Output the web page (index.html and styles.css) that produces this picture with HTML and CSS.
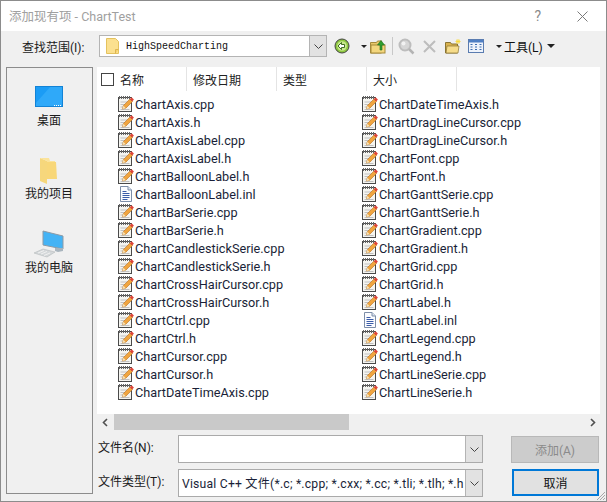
FILE: index.html
```html
<!DOCTYPE html>
<html lang="zh">
<head>
<meta charset="utf-8">
<title>添加现有项 - ChartTest</title>
<link rel="stylesheet" href="styles.css">
</head>
<body>
<svg class="defs" width="0" height="0" aria-hidden="true">
  <symbol id="cpp" viewBox="0 0 18 18">
    <rect x="1.500" y="2.500" width="13" height="14" fill="#f4f4f0" stroke="#4a4a4a"/>
    <path d="M2.500 1v3M4.500 1v3M6.500 1v3M8.500 1v3M10.500 1v3M12.500 1v3" stroke="#666"/>
    <path d="M3.500 7h8M3.500 9.500h5M3.500 12h3M3.500 14.500h9" stroke="#c0c0c0"/>
    <path d="M5.500 14l.8-3.300 6.700-6.700 2.500 2.500-6.700 6.700z" fill="#f0a540" stroke="#b8701e" stroke-width=".6"/>
    <path d="M5.500 14l.8-3.300 2.500 2.500z" fill="#f6e2b6"/>
    <path d="M12.800 4.200l1.700-2 2.400 2.200-1.700 2z" fill="#dd4438"/>
  </symbol>
  <symbol id="inl" viewBox="0 0 18 18">
    <path d="M3.500 1.500h7.500l3.500 3.500v11.500h-11z" fill="#fbfcff" stroke="#7d8ea8"/>
    <path d="M11 1.500v3.500h3.500" fill="#dfe6f2" stroke="#7d8ea8"/>
    <path d="M5.500 6.500h4M5.500 8.500h7M5.500 10.500h7M5.500 12.500h7M5.500 14.500h5" stroke="#3a5ca8"/>
  </symbol>
  <symbol id="folder" viewBox="0 0 16 18">
    <path d="M.5 1.500h9l3 3v12h-12z" fill="#fbe08f" stroke="#e4c25e"/>
    <path d="M9.500 16.500v-4h3" fill="#f6d06a" stroke="#dcb550"/>
  </symbol>
</svg>
<div class="window">
  <header class="titlebar">
    <span class="title">添加现有项 - ChartTest</span>
    <span class="help">?</span>
    <svg class="close" width="11" height="11" viewBox="0 0 11 11"><path d="M.5.5l10 10M10.500.5l-10 10" stroke="#7a7a7a" fill="none"/></svg>
  </header>
  <div class="dialog">
    <div class="lookrow">
      <span class="looklabel">查找范围(I):</span>
      <div class="combo lookcombo">
        <svg class="lookfolder" width="16" height="18"><use href="#folder"/></svg>
        <span class="lookvalue">HighSpeedCharting</span>
        <span class="drop lookdrop"><svg width="9" height="5" viewBox="0 0 9 5"><path d="M.5.500l4 4 4-4" stroke="#444" fill="none"/></svg></span>
      </div>
      <div class="toolbar">
        <svg class="tool-back" width="16" height="16" viewBox="0 0 16 16">
          <circle cx="8" cy="8" r="7" fill="#8cc63f" stroke="#444"/>
          <circle cx="8" cy="8" r="4.800" fill="#c9e88e"/>
          <path d="M10.500 6.500h-3v-2l-3.500 3.500 3.500 3.500v-2h3z" fill="#fff" stroke="#2f5d12" stroke-width=".9"/>
        </svg>
        <span class="tri tool-tri1"></span>
        <svg class="tool-up" width="16" height="15" viewBox="0 0 16 15">
          <path d="M.5 3.500h6l1-1.500h4v12h-11z" fill="#e8c86a" stroke="#a68a3a"/>
          <rect x="1" y="6" width="14" height="8" fill="#f3d67d" stroke="#a68a3a"/>
          <path d="M10 11v-5h-2.500l3.500-4.500 3.500 4.500h-2.500v5z" fill="#2f9e2f" stroke="#1e6e1e" stroke-width=".6"/>
        </svg>
        <span class="tool-sep"></span>
        <svg class="tool-search" width="17" height="17" viewBox="0 0 17 17">
          <circle cx="7" cy="7" r="5.500" fill="#d6d6d6" stroke="#bdbdbd" stroke-width="2"/>
          <circle cx="5.500" cy="5.500" r="2" fill="#f2f2f2"/>
          <path d="M11 11l4.500 4.500" stroke="#b4b4b4" stroke-width="2.500"/>
        </svg>
        <svg class="tool-x" width="13" height="13" viewBox="0 0 13 13"><path d="M1 1l11 11M12 1l-11 11" stroke="#bdbdbd" stroke-width="2"/></svg>
        <svg class="tool-new" width="16" height="15" viewBox="0 0 16 15">
          <path d="M.5 3.500h5l1 1.500h6v9h-12z" fill="#d9b24f" stroke="#8a7432"/>
          <path d="M1 14l1-7h12l-1 7z" fill="#f6dc8a" stroke="#8a7432" stroke-width=".7"/>
          <path d="M13 0v5M10.500 2.500h5M11 .8l4 3.400M15 .8l-4 3.400" stroke="#f8d93a" stroke-width=".9"/>
        </svg>
        <svg class="tool-grid" width="16" height="14" viewBox="0 0 16 14">
          <rect x=".5" y=".5" width="15" height="13" fill="#eef3fb" stroke="#5a7cb0"/>
          <rect x="1" y="1" width="14" height="2.500" fill="#4f7fc4"/>
          <path d="M2.500 5.500h2M2.500 8h2M2.500 10.500h2M7 5.500h2M7 8h2M7 10.500h2M11.500 5.500h2M11.500 8h2M11.500 10.500h2" stroke="#3d6cb0"/>
        </svg>
        <span class="tri tool-tri2"></span>
        <span class="tool-label">工具(L)</span>
        <span class="tri tri-big"></span>
      </div>
    </div>
    <div class="main">
      <nav class="places">
        <div class="place place-desktop">
          <svg width="28" height="21" viewBox="0 0 28 21">
            <rect width="28" height="21" fill="#1b9cf5"/>
            <path d="M0 21l0-3 16-18h12v21z" fill="#2fa9f9"/>
            <rect x=".5" y=".5" width="27" height="20" fill="none" stroke="#1283d6"/>
            <path d="M19 19.500h1M21 19.500h1M23 19.500h1M25 19.500h1" stroke="#fff"/>
          </svg>
          <span>桌面</span>
        </div>
        <div class="place place-projects">
          <svg width="20" height="27" viewBox="0 0 20 27">
            <path d="M1 1l7 3v23l-7-3z" fill="#f6d77c"/>
            <path d="M1 1h9l1 3h5v18h-8v-18z" fill="#fbe39b"/>
            <path d="M8 5h9l1 17h-10z" fill="#f8d779"/>
          </svg>
          <span>我的项目</span>
        </div>
        <div class="place place-pc">
          <svg width="32" height="29" viewBox="0 0 32 29">
            <path d="M10 2l20 5v13l-20-4z" fill="#44b3f5" stroke="#8d9aa5"/>
            <path d="M22 19v3l3 1 5-1v-3z" fill="#a8b4bd"/>
            <path d="M1 24l9-4 12 3-8 5z" fill="#d4d8da" stroke="#b4b8bb" stroke-width=".6"/>
            <path d="M5 24l6-2.500M8 25l6-2.500M11 26.500l6-2.500" stroke="#f0f0f0"/>
          </svg>
          <span>我的电脑</span>
        </div>
      </nav>
      <div class="pane">
        <section class="list">
          <div class="listhead">
            <span class="col col-name"><i class="check"></i>名称</span>
            <span class="col">修改日期</span>
            <span class="col">类型</span>
            <span class="col">大小</span>
          </div>
          <div class="files">
            <ul class="filecol">
              <li><svg><use href="#cpp"/></svg>ChartAxis.cpp</li>
              <li><svg><use href="#cpp"/></svg>ChartAxis.h</li>
              <li><svg><use href="#cpp"/></svg>ChartAxisLabel.cpp</li>
              <li><svg><use href="#cpp"/></svg>ChartAxisLabel.h</li>
              <li><svg><use href="#cpp"/></svg>ChartBalloonLabel.h</li>
              <li><svg><use href="#inl"/></svg>ChartBalloonLabel.inl</li>
              <li><svg><use href="#cpp"/></svg>ChartBarSerie.cpp</li>
              <li><svg><use href="#cpp"/></svg>ChartBarSerie.h</li>
              <li><svg><use href="#cpp"/></svg>ChartCandlestickSerie.cpp</li>
              <li><svg><use href="#cpp"/></svg>ChartCandlestickSerie.h</li>
              <li><svg><use href="#cpp"/></svg>ChartCrossHairCursor.cpp</li>
              <li><svg><use href="#cpp"/></svg>ChartCrossHairCursor.h</li>
              <li><svg><use href="#cpp"/></svg>ChartCtrl.cpp</li>
              <li><svg><use href="#cpp"/></svg>ChartCtrl.h</li>
              <li><svg><use href="#cpp"/></svg>ChartCursor.cpp</li>
              <li><svg><use href="#cpp"/></svg>ChartCursor.h</li>
              <li><svg><use href="#cpp"/></svg>ChartDateTimeAxis.cpp</li>
            </ul>
            <ul class="filecol">
              <li><svg><use href="#cpp"/></svg>ChartDateTimeAxis.h</li>
              <li><svg><use href="#cpp"/></svg>ChartDragLineCursor.cpp</li>
              <li><svg><use href="#cpp"/></svg>ChartDragLineCursor.h</li>
              <li><svg><use href="#cpp"/></svg>ChartFont.cpp</li>
              <li><svg><use href="#cpp"/></svg>ChartFont.h</li>
              <li><svg><use href="#cpp"/></svg>ChartGanttSerie.cpp</li>
              <li><svg><use href="#cpp"/></svg>ChartGanttSerie.h</li>
              <li><svg><use href="#cpp"/></svg>ChartGradient.cpp</li>
              <li><svg><use href="#cpp"/></svg>ChartGradient.h</li>
              <li><svg><use href="#cpp"/></svg>ChartGrid.cpp</li>
              <li><svg><use href="#cpp"/></svg>ChartGrid.h</li>
              <li><svg><use href="#cpp"/></svg>ChartLabel.h</li>
              <li><svg><use href="#inl"/></svg>ChartLabel.inl</li>
              <li><svg><use href="#cpp"/></svg>ChartLegend.cpp</li>
              <li><svg><use href="#cpp"/></svg>ChartLegend.h</li>
              <li><svg><use href="#cpp"/></svg>ChartLineSerie.cpp</li>
              <li><svg><use href="#cpp"/></svg>ChartLineSerie.h</li>
            </ul>
          </div>
        </section>
        <div class="hscroll">
          <svg class="arrow" width="6" height="9" viewBox="0 0 6 9"><path d="M5 1l-3.500 3.500 3.500 3.500" stroke="#505050" stroke-width="1.600" fill="none"/></svg>
          <div class="track"><div class="thumb"></div></div>
          <svg class="arrow" width="6" height="9" viewBox="0 0 6 9"><path d="M1 1l3.500 3.500-3.500 3.500" stroke="#505050" stroke-width="1.600" fill="none"/></svg>
        </div>
        <div class="form">
          <label class="formlabel">文件名(N):</label>
          <div class="combo namecombo">
            <span class="comboval"></span>
            <span class="drop"><svg width="9" height="5" viewBox="0 0 9 5"><path d="M.5.500l4 4 4-4" stroke="#444" fill="none"/></svg></span>
          </div>
          <button class="btn btn-add" type="button">添加(A)</button>
          <label class="formlabel">文件类型(T):</label>
          <div class="combo typecombo">
            <span class="comboval">Visual C++ 文件(*.c; *.cpp; *.cxx; *.cc; *.tli; *.tlh; *.h</span>
            <span class="drop"><svg width="9" height="5" viewBox="0 0 9 5"><path d="M.5.500l4 4 4-4" stroke="#444" fill="none"/></svg></span>
          </div>
          <button class="btn btn-cancel" type="button">取消</button>
        </div>
      </div>
    </div>
  </div>
  <svg class="grip" width="11" height="11" viewBox="0 0 11 11"><path d="M10 2l-8 8M10 5l-5 5M10 8l-2 2" stroke="#a8a8a8" fill="none"/></svg>
</div>
</body>
</html>
```
FILE: styles.css
```css
* { box-sizing: border-box; }
html, body { margin: 0; padding: 0; }
body {
  width: 607px;
  height: 502px;
  overflow: hidden;
  font-family: Roboto, "Noto Sans CJK SC", sans-serif;
  font-size: 12px;
  color: #1a1a1a;
}
.defs { display: block; height: 0; }
.window {
  position: relative;
  width: 607px;
  height: 502px;
  display: flex;
  flex-direction: column;
  border: 1px solid #8c8c8c;
  background: #f0f0f0;
}
.grip { position: absolute; right: 0; bottom: 0; }
.titlebar {
  height: 30px;
  flex: none;
  display: flex;
  align-items: center;
  background: #fff;
  padding-left: 8px;
}
.title { color: #a0a0a0; font-size: 12.500px; flex: 1; margin-top: -2px; }
.help { color: #8a8a8a; font-size: 14px; margin-right: 36px; }
.close { margin-right: 18px; }
.dialog { flex: 1; display: flex; flex-direction: column; min-height: 0; padding: 4px 6px 4px 5px; }
.lookrow { height: 22px; flex: none; display: flex; align-items: center; margin-bottom: 10px; }
.looklabel { width: 93px; padding-left: 16px; white-space: nowrap; font-size: 12px; }
.combo {
  display: flex;
  align-items: stretch;
  border: 1px solid #b4b4b4;
  background: #fff;
}
.lookcombo { width: 228px; height: 22px; align-items: center; padding-left: 6px; }
.lookfolder { flex: none; width: 16px; height: 18px; }
.lookvalue {
  flex: 1;
  padding-left: 4px;
  font-family: "Liberation Mono", monospace;
  font-size: 10px;
  color: #111;
}
.drop {
  flex: none;
  width: 17px;
  display: flex;
  align-items: center;
  justify-content: center;
  background: #e2e2e2;
  border-left: 1px solid #b4b4b4;
}
.lookdrop { align-self: stretch; }
.toolbar { display: flex; align-items: center; height: 22px; padding-left: 7px; flex: 1; }
.tool-back { margin-right: 11px; }
.tri {
  flex: none;
  width: 0;
  height: 0;
  border-left: 3px solid transparent;
  border-right: 3px solid transparent;
  border-top: 3px solid #222;
}
.tool-tri1 { margin-right: 3px; }
.tool-up { margin-right: 6px; }
.tool-sep { width: 1px; height: 18px; background: #c8c8c8; margin-right: 5px; }
.tool-search { margin-right: 8px; }
.tool-x { margin-right: 9px; }
.tool-new { margin-right: 7px; }
.tool-grid { margin-right: 12px; }
.tool-tri2 { margin-right: 2px; }
.tool-label { font-size: 12px; color: #111; margin-right: 4px; white-space: nowrap; }
.tri-big { border-left-width: 4px; border-right-width: 4px; border-top-width: 4px; }
.main { flex: 1; min-height: 0; display: flex; }
.places {
  width: 87px;
  height: 427px;
  flex: none;
  border: 1px solid #8c8c8c;
  margin-right: 4px;
  display: flex;
  flex-direction: column;
  align-items: center;
  padding-top: 18px;
  padding-right: 1px;
}
.place { display: flex; flex-direction: column; align-items: center; font-size: 12px; color: #1a1a1a; line-height: 18px; }
.place svg { display: block; }
.place-desktop { margin-bottom: 27px; gap: 5px; }
.place-projects { margin-bottom: 26px; gap: 1px; }
.place-pc { gap: 1px; }
.pane { width: 503px; display: flex; flex-direction: column; min-height: 0; }
.list { height: 347px; flex: none; background: #fff; display: flex; flex-direction: column; }
.listhead { height: 24px; flex: none; display: flex; }
.col {
  width: 90px;
  flex: none;
  border-right: 1px solid #e4e4e4;
  padding-left: 6px;
  display: flex;
  align-items: center;
  font-size: 12px;
  color: #222;
}
.col-name { padding-left: 4px; }
.check { width: 13px; height: 13px; border: 1px solid #444; background: #fff; margin-right: 6px; flex: none; }
.files { display: flex; padding: 4px 0 0 20px; }
.filecol { list-style: none; margin: 0; padding: 0; width: 244px; flex: none; }
.filecol li {
  height: 18px;
  display: flex;
  align-items: center;
  font-size: 12.700px;
  color: #1a1f38;
  white-space: nowrap;
}
.filecol svg { width: 18px; height: 18px; flex: none; }
.hscroll { height: 16px; flex: none; display: flex; align-items: center; padding: 0 4px 0 5px; }
.arrow { flex: none; }
.track { flex: 1; height: 16px; padding-left: 6px; }
.thumb { width: 235px; height: 16px; background: #c9c9c9; }
.form {
  display: grid;
  grid-template-columns: 79px 306px 1fr;
  grid-template-rows: 28px 28px;
  row-gap: 6px;
  align-items: stretch;
  padding: 5px 0 0 1px;
}
.formlabel { align-self: center; font-size: 12px; color: #1a1a1a; white-space: nowrap; margin-bottom: 6px; }
.namecombo, .typecombo { border: 1px solid #aaa; height: 28px; margin-left: 1px; }
.comboval {
  flex: 1;
  min-width: 0;
  padding-left: 3px;
  display: flex;
  align-items: center;
  font-size: 12.200px;
  letter-spacing: .2px;
  color: #1a1f38;
  overflow: hidden;
  white-space: nowrap;
}
.btn {
  font: inherit;
  font-size: 12px;
  padding: 0;
  height: 27px;
  margin: 1px 1px 0 28px;
}
.btn-add { background: #cccccc; border: 1px solid #b8b8b8; color: #8a8a8a; }
.btn-cancel { background: #e1e1e1; border: 2px solid #0078d7; color: #111; margin-top: 0; margin-left: 29px; }
```
